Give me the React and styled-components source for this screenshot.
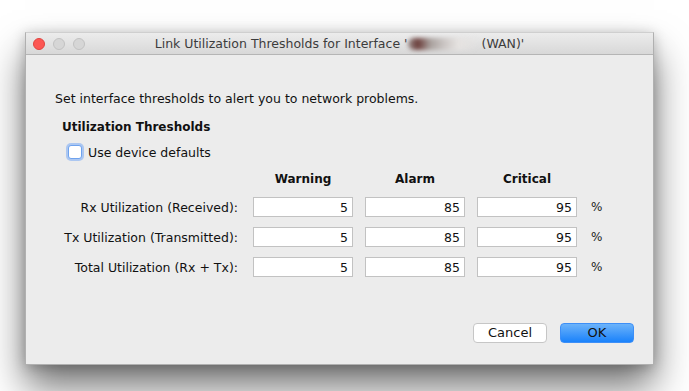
import React, { useState } from "react";
import styled, { createGlobalStyle } from "styled-components";

const GlobalStyle = createGlobalStyle`
  html, body {
    margin: 0;
    background: #ffffff;
  }
  body {
    font-family: "Lucida Grande", "DejaVu Sans", "Liberation Sans", sans-serif;
    font-size: 12.5px;
    color: #111;
  }
`;

const Page = styled.div`
  width: 689px;
  height: 391px;
  padding: 32px 0 0 25px;
  box-sizing: border-box;
  overflow: hidden;
`;

const Window = styled.div`
  width: 629px;
  height: 333px;
  display: flex;
  flex-direction: column;
  background: #ececec;
  border: 1px solid #b0b0b0;
  border-top-color: #cfcfcf;
  box-sizing: border-box;
  box-shadow: 0 22px 36px rgba(0, 0, 0, 0.55), 0 2px 12px rgba(0, 0, 0, 0.22);
`;

const TitleBar = styled.div`
  height: 21px;
  display: flex;
  align-items: center;
  background: linear-gradient(#ececec, #d8d8d8);
  border-bottom: 1px solid #b5b5b5;
`;

const Lights = styled.div`
  width: 60px;
  display: flex;
  gap: 8px;
  padding-left: 7px;
  box-sizing: border-box;
`;

const Light = styled.span`
  width: 12px;
  height: 12px;
  border-radius: 50%;
  box-sizing: border-box;
  background: ${p => (p.close ? "#fc5753" : "#d6d6d6")};
  border: 1px solid ${p => (p.close ? "#e0443f" : "#c2c2c2")};
`;

const Title = styled.div`
  flex: 1;
  font-size: 12.5px;
  color: #3c3c3c;
  white-space: nowrap;
  display: flex;
  justify-content: center;
  align-items: center;
`;

const Redacted = styled.span`
  display: inline-block;
  width: 70px;
  height: 12px;
  margin: 0 4px 0 0;
  background: linear-gradient(90deg, #9a8e8c 0%, #6b3d3a 14%, #a9a19e 32%, #cbc6c4 52%, #e6e3e1 72%, transparent 100%);
  filter: blur(2px);
  border-radius: 6px;
`;

const Content = styled.div`
  flex: 1;
  display: flex;
  flex-direction: column;
  padding: 36px 19px 21px 29px;
`;

const Intro = styled.div`
  line-height: 16px;
`;

const Heading = styled.div`
  font-weight: bold;
  font-size: 12px;
  line-height: 16px;
  margin: 12px 0 0 7px;
`;

const CheckRow = styled.label`
  display: flex;
  align-items: center;
  gap: 6px;
  height: 16px;
  margin: 9px 0 0 13px;
`;

const CheckBox = styled.span`
  width: 14px;
  height: 14px;
  box-sizing: border-box;
  border-radius: 3px;
  background: #fff;
  border: 1px solid #6fa3ee;
  box-shadow: 0 0 0 2px rgba(120, 170, 245, 0.55);
`;

const Grid = styled.div`
  display: grid;
  grid-template-columns: 186px 100px 100px 100px auto;
  column-gap: 12px;
  row-gap: 10px;
  margin-top: 11px;
  align-items: center;
`;

const ColHead = styled.div`
  font-weight: bold;
  font-size: 12px;
  text-align: center;
  line-height: 16px;
`;

const RowLabel = styled.div`
  text-align: right;
  padding-right: 3px;
`;

const Field = styled.input`
  height: 20px;
  width: 100px;
  box-sizing: border-box;
  border: 1px solid #c2c2c2;
  background: #fff;
  text-align: right;
  padding: 0 4px 0 0;
  font: inherit;
  color: #111;
  outline: none;
`;

const Unit = styled.div`
  margin-left: 2px;
  font-size: 12px;
  color: #222;
`;

const Footer = styled.div`
  margin-top: auto;
  display: flex;
  justify-content: flex-end;
  gap: 13px;
`;

const Button = styled.button`
  width: 74px;
  height: 20px;
  font: inherit;
  font-size: 13px;
  line-height: 18px;
  padding: 0;
  border-radius: 4px;
  color: #111;
  border: 1px solid ${p => (p.primary ? "#3d8ff7" : "#c6c6c6")};
  background: ${p => (p.primary ? "linear-gradient(#6cb3fa, #1a82fb)" : "#fff")};
`;

const rows = [
  { label: "Rx Utilization (Received):", values: [5, 85, 95] },
  { label: "Tx Utilization (Transmitted):", values: [5, 85, 95] },
  { label: "Total Utilization (Rx + Tx):", values: [5, 85, 95] },
];

export default function App() {
  const [data, setData] = useState(rows);

  const onChange = (r, c) => e => {
    const next = data.map((row, i) =>
      i === r ? { ...row, values: row.values.map((v, j) => (j === c ? e.target.value : v)) } : row
    );
    setData(next);
  };

  return (
    <Page>
      <GlobalStyle />
      <Window>
        <TitleBar>
          <Lights>
            <Light close />
            <Light />
            <Light />
          </Lights>
          <Title>
            Link Utilization Thresholds for Interface '<Redacted />(WAN)'
          </Title>
          <Lights />
        </TitleBar>
        <Content>
          <Intro>Set interface thresholds to alert you to network problems.</Intro>
          <Heading>Utilization Thresholds</Heading>
          <CheckRow>
            <CheckBox />
            Use device defaults
          </CheckRow>
          <Grid>
            <div />
            <ColHead>Warning</ColHead>
            <ColHead>Alarm</ColHead>
            <ColHead>Critical</ColHead>
            <div />
            {data.map((row, r) => (
              <React.Fragment key={r}>
                <RowLabel>{row.label}</RowLabel>
                {row.values.map((v, c) => (
                  <Field key={c} value={v} onChange={onChange(r, c)} />
                ))}
                <Unit>%</Unit>
              </React.Fragment>
            ))}
          </Grid>
          <Footer>
            <Button>Cancel</Button>
            <Button primary>OK</Button>
          </Footer>
        </Content>
      </Window>
    </Page>
  );
}
